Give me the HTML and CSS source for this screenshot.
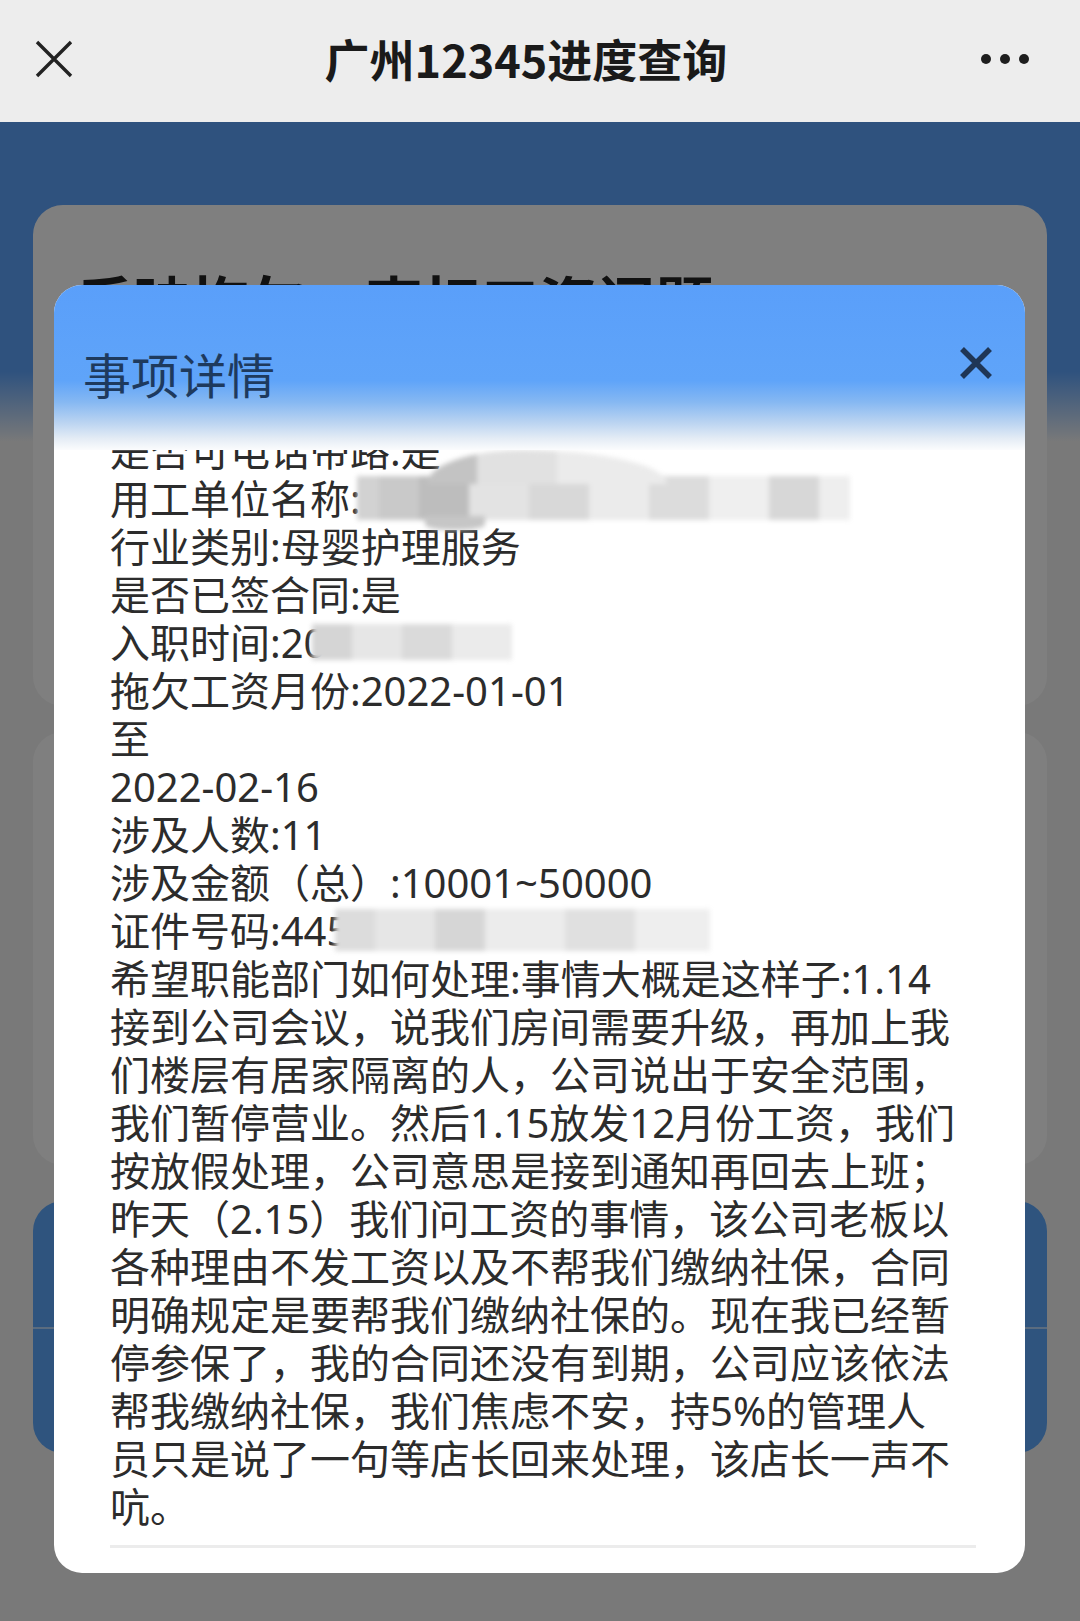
FILE: index.html
```html
<!DOCTYPE html>
<html lang="zh-CN">
<head>
<meta charset="utf-8">
<title>广州12345进度查询</title>
<link rel="stylesheet" href="styles.css">
</head>
<body>
<header class="navbar">
  <svg class="nav-close" width="38" height="38" viewBox="0 0 38 38"><path d="M2 2L36 36M36 2L2 36" stroke="#222" stroke-width="3.4" fill="none"/></svg>
  <h1 class="nav-title">广州12345进度查询</h1>
  <div class="nav-more"><span></span><span></span><span></span></div>
</header>
<main class="page">
  <section class="card card-summary"><h2 class="card-title">反映拖欠、克扣工资问题</h2></section>
  <section class="card card-info"></section>
  <section class="card-actions"><div class="action"></div><div class="action"></div></section>
  <div class="mask"></div>
  <div class="modal">
    <div class="modal-head">
      <h3 class="modal-title">事项详情</h3>
      <svg class="modal-close" width="34" height="34" viewBox="0 0 34 34"><path d="M3 3L31 31M31 3L3 31" stroke="#1f3656" stroke-width="5.5" fill="none"/></svg>
    </div>
    <div class="modal-body">
      <div class="detail">
        <p>是否可电话带路:是</p>
        <p>用工单位名称:<span class="mosaic mosaic-company"></span></p>
        <p>行业类别:母婴护理服务</p>
        <p>是否已签合同:是</p>
        <p>入职时间:20<span class="mosaic mosaic-date"></span></p>
        <p>拖欠工资月份:2022-01-01</p>
        <p>至</p>
        <p>2022-02-16</p>
        <p>涉及人数:11</p>
        <p>涉及金额（总）:10001~50000</p>
        <p>证件号码:445<span class="mosaic mosaic-id"></span></p>
        <p>希望职能部门如何处理:事情大概是这样子:1.14接到公司会议，说我们房间需要升级，再加上我们楼层有居家隔离的人，公司说出于安全范围，我们暂停营业。然后1.15放发12月份工资，我们按放假处理，公司意思是接到通知再回去上班；昨天（2.15）我们问工资的事情，该公司老板以各种理由不发工资以及不帮我们缴纳社保，合同明确规定是要帮我们缴纳社保的。现在我已经暂停参保了，我的合同还没有到期，公司应该依法帮我缴纳社保，我们焦虑不安，持5%的管理人员只是说了一句等店长回来处理，该店长一声不吭。</p>
      </div>
      <div class="divider"></div>
    </div>
  </div>
</main>
</body>
</html>
```
FILE: styles.css
```css
* { box-sizing: border-box; }
html, body { margin: 0; padding: 0; }
body {
  width: 1080px;
  height: 1621px;
  overflow: hidden;
  background: #f3f3f3;
  font-family: "Noto Sans", "Noto Sans CJK SC", sans-serif;
}
.navbar {
  height: 122px;
  background: #ededed;
  display: grid;
  grid-template-columns: 1fr auto 1fr;
  align-items: center;
  padding: 0 51px 4px 35px;
}
.nav-close { display: block; }
.nav-title {
  margin: 0;
  font-family: "Noto Sans CJK SC", sans-serif;
  font-weight: 700;
  font-size: 45px;
  line-height: 52px;
  color: #1a1a1a;
  transform: translateX(-6px);
}
.nav-more {
  justify-self: end;
  display: flex;
  gap: 9px;
}
.nav-more span {
  width: 10px;
  height: 10px;
  border-radius: 50%;
  background: #1e1e1e;
}
.page {
  position: relative;
  height: 1499px;
  overflow: hidden;
  padding: 83px 33px 0;
  background: linear-gradient(180deg, #5fa5fd 0, #5fa5fd 250px, #f3f3f3 320px);
  display: flex;
  flex-direction: column;
}
.card {
  background: #ffffff;
  border-radius: 30px;
}
.card-summary {
  height: 501px;
  padding: 60px 42px 0;
}
.card-title {
  margin: 0;
  font-family: "Noto Sans CJK SC", sans-serif;
  font-weight: 700;
  font-size: 58px;
  line-height: 70px;
  color: #222;
}
.card-info {
  margin-top: 26px;
  height: 433px;
}
.card-actions {
  margin-top: 36px;
  height: 252px;
  border-radius: 30px;
  background: #5ea9fc;
  display: flex;
  flex-direction: column;
}
.action { height: 130px; }
.action + .action { border-top: 2px solid rgba(255, 255, 255, 0.55); }
.mask {
  position: absolute;
  inset: 0;
  background: rgba(0, 0, 0, 0.5);
}
.modal {
  position: absolute;
  left: 54px;
  top: 163px;
  width: 971px;
  height: 1288px;
  border-radius: 28px;
  overflow: hidden;
  background: #ffffff;
  display: flex;
  flex-direction: column;
}
.modal-head {
  height: 165px;
  flex: none;
  display: flex;
  justify-content: space-between;
  align-items: flex-start;
  padding: 64px 32px 0 29px;
  background: linear-gradient(180deg, #5a9ffa 0%, #5fa4f9 58%, #86b8f2 71%, #b9d3f1 83%, #e4ecf5 93%, #fbfcfd 100%);
}
.modal-title {
  margin: 0;
  font-family: "Noto Sans CJK SC", sans-serif;
  font-weight: 400;
  font-size: 48px;
  line-height: 48px;
  color: #1e3a5e;
}
.modal-close { margin-top: -3px; }
.modal-body {
  flex: 1;
  overflow: hidden;
  padding: 0 67px 0 56px;
}
.detail {
  margin-top: -23px;
  font-size: 40px;
  line-height: 48px;
  color: #2c2c2c;
}
.detail p { margin: 0; }
.divider {
  margin-top: 14px;
  width: 866px;
  height: 3px;
  background: #ececec;
}
.mosaic {
  display: inline-block;
  position: relative;
  vertical-align: middle;
  transform: translateY(-5px);
  filter: blur(2.4px);
}
.mosaic-company {
  width: 493px;
  height: 44px;
  margin: -12px 0 -12px -4px;
  background: linear-gradient(90deg, #d2d2d2 0 22px, #c9c9c9 22px 62px, #bdbdbd 62px 112px, #e3e3e3 112px 172px, #d8d8d8 172px 232px, #ebebeb 232px 292px, #dcdcdc 292px 352px, #efefef 352px 412px, #d7d7d7 412px 462px, #eeeeee 462px 493px);
}
.mosaic-company::before {
  content: "";
  position: absolute;
  left: 70px;
  top: -26px;
  width: 240px;
  height: 34px;
  border-radius: 40% 60% 0 0 / 100% 100% 0 0;
  background: linear-gradient(90deg, #c3c3c3 0 50px, #e1e1e1 50px 130px, #ebebeb 130px 240px);
}
.mosaic-company::after {
  content: "";
  position: absolute;
  left: 68px;
  bottom: -10px;
  width: 60px;
  height: 14px;
  border-radius: 0 0 40% 40%;
  background: #c6c6c6;
}
.mosaic-date {
  width: 200px;
  height: 36px;
  margin: -10px 0 -10px -14px;
  background: linear-gradient(90deg, #d5d5d5 0 40px, #e6e6e6 40px 90px, #dadada 90px 140px, #ebebeb 140px 200px);
}
.mosaic-id {
  width: 375px;
  height: 42px;
  margin: -12px 0 -12px -14px;
  background: linear-gradient(90deg, #dcdcdc 0 40px, #e6e6e6 40px 100px, #d6d6d6 100px 150px, #ececec 150px 230px, #e0e0e0 230px 300px, #eeeeee 300px 375px);
}
```
